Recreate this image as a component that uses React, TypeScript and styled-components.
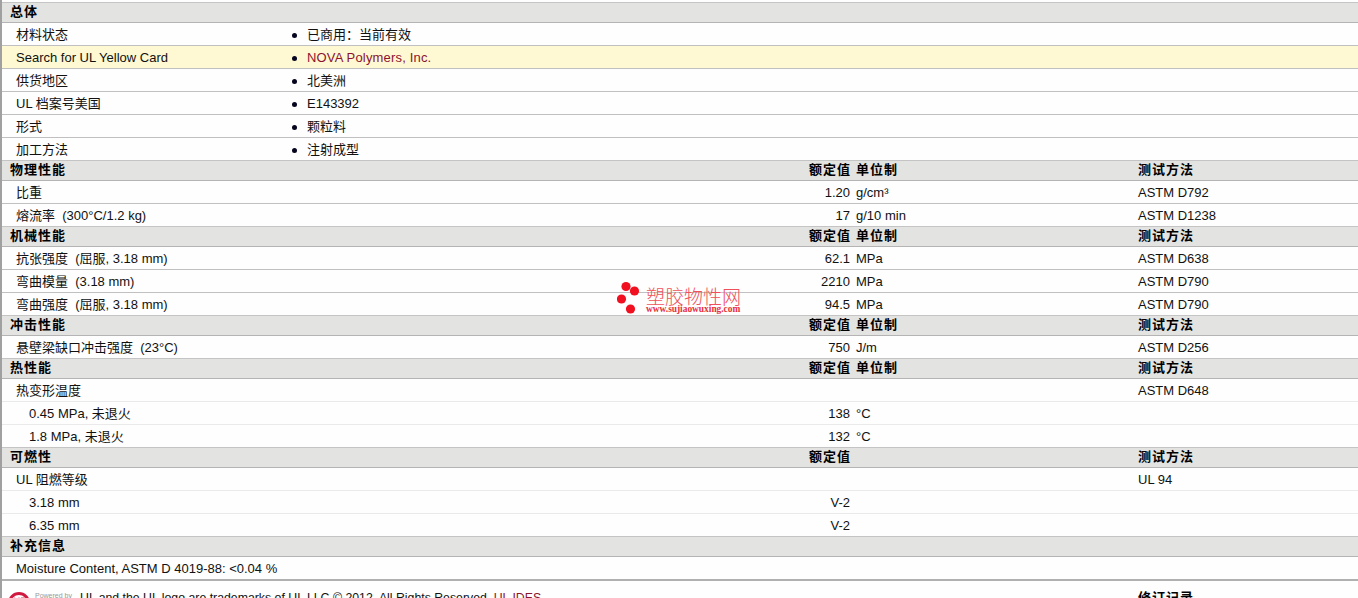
import { createGlobalStyle, styled } from "styled-components";

const GlobalStyle = createGlobalStyle`
  html, body {
    margin: 0;
    height: 598px;
    overflow: hidden;
    background: #fdfefd;
  }
  body {
    font-family: "Liberation Sans", "Noto Sans CJK SC", sans-serif;
    font-size: 13px;
    line-height: 16px;
    color: #111;
  }
`;

type Spec = {
  label: string;
  value?: string;
  unit?: string;
  method?: string;
  sub?: boolean;
  soft?: boolean;
};

type Section = {
  title: string;
  value?: string;
  unit?: string;
  method?: string;
  rows: Spec[];
};

const overview = [
  { label: "材料状态", value: "已商用：当前有效" },
  { label: "Search for UL Yellow Card", value: "NOVA Polymers, Inc.", highlight: true },
  { label: "供货地区", value: "北美洲" },
  { label: "UL 档案号美国", value: "E143392" },
  { label: "形式", value: "颗粒料" },
  { label: "加工方法", value: "注射成型" },
];

const sections: Section[] = [
  {
    title: "物理性能",
    value: "额定值",
    unit: "单位制",
    method: "测试方法",
    rows: [
      { label: "比重", value: "1.20", unit: "g/cm³", method: "ASTM D792" },
      { label: "熔流率\u00a0 (300°C/1.2 kg)", value: "17", unit: "g/10 min", method: "ASTM D1238" },
    ],
  },
  {
    title: "机械性能",
    value: "额定值",
    unit: "单位制",
    method: "测试方法",
    rows: [
      { label: "抗张强度\u00a0 (屈服, 3.18 mm)", value: "62.1", unit: "MPa", method: "ASTM D638" },
      { label: "弯曲模量\u00a0 (3.18 mm)", value: "2210", unit: "MPa", method: "ASTM D790" },
      { label: "弯曲强度\u00a0 (屈服, 3.18 mm)", value: "94.5", unit: "MPa", method: "ASTM D790" },
    ],
  },
  {
    title: "冲击性能",
    value: "额定值",
    unit: "单位制",
    method: "测试方法",
    rows: [{ label: "悬壁梁缺口冲击强度\u00a0 (23°C)", value: "750", unit: "J/m", method: "ASTM D256" }],
  },
  {
    title: "热性能",
    value: "额定值",
    unit: "单位制",
    method: "测试方法",
    rows: [
      { label: "热变形温度", method: "ASTM D648", soft: true },
      { label: "0.45 MPa, 未退火", value: "138", unit: "°C", sub: true, soft: true },
      { label: "1.8 MPa, 未退火", value: "132", unit: "°C", sub: true },
    ],
  },
  {
    title: "可燃性",
    value: "额定值",
    method: "测试方法",
    rows: [
      { label: "UL 阻燃等级", method: "UL 94", soft: true },
      { label: "3.18 mm", value: "V-2", sub: true, soft: true },
      { label: "6.35 mm", value: "V-2", sub: true },
    ],
  },
];

function Watermark() {
  return (
    <WatermarkBox>
      <svg width="26" height="36" viewBox="0 0 26 36">
        <circle cx="9" cy="5.5" r="4.6" fill="#f01020" />
        <circle cx="17.5" cy="10" r="4.6" fill="#f01020" />
        <circle cx="4.5" cy="18" r="4.6" fill="#f01020" />
        <circle cx="13.5" cy="28" r="4.6" fill="#f01020" />
      </svg>
      <WatermarkText>
        <WatermarkName>塑胶物性网</WatermarkName>
        <WatermarkUrl>www.sujiaowuxing.com</WatermarkUrl>
      </WatermarkText>
    </WatermarkBox>
  );
}

export default function App() {
  return (
    <Page>
      <GlobalStyle />
      <Watermark />
      <div>
        <SectionHeader>
          <b>总体</b>
        </SectionHeader>
        {overview.map((row) => (
          <OverviewRow key={row.label} $highlight={row.highlight}>
            <span>{row.label}</span>
            <Bullet />
            <OverviewValue $highlight={row.highlight}>{row.value}</OverviewValue>
          </OverviewRow>
        ))}
      </div>
      {sections.map((section) => (
        <div key={section.title}>
          <SectionHeader>
            <b>{section.title}</b>
            <ValueCell as="b">{section.value}</ValueCell>
            <UnitCell as="b">{section.unit}</UnitCell>
            <b>{section.method}</b>
          </SectionHeader>
          {section.rows.map((row) => (
            <SpecRow key={row.label} $sub={row.sub} $soft={row.soft}>
              <span>{row.label}</span>
              <ValueCell>{row.value}</ValueCell>
              <UnitCell>{row.unit}</UnitCell>
              <span>{row.method}</span>
            </SpecRow>
          ))}
        </div>
      ))}
      <SectionHeader>
        <b>补充信息</b>
      </SectionHeader>
      <NoteRow>Moisture Content, ASTM D 4019-88: &lt;0.04 %</NoteRow>
      <Footer>
        <UlLogo>
          <svg width="24" height="24" viewBox="0 0 24 24">
            <circle cx="12" cy="12" r="9.5" fill="none" stroke="#d01840" strokeWidth="3" />
            <path d="M7.5 6.5v3M12 6.5v3M14 7h4" fill="none" stroke="#e87890" strokeWidth="1.5" />
          </svg>
        </UlLogo>
        <PoweredBy>Powered by</PoweredBy>
        <FooterText>
          UL and the UL logo are trademarks of UL LLC © 2012. All Rights Reserved. <FooterLink>UL IDES</FooterLink>
        </FooterText>
        <RevisionTitle>修订记录</RevisionTitle>
      </Footer>
    </Page>
  );
}

const Page = styled.div`
  position: relative;
  box-sizing: border-box;
  height: 598px;
  overflow: hidden;
  padding-top: 2px;
  border-left: 2px solid #a0a0a0;
`;

const SectionHeader = styled.div`
  box-sizing: border-box;
  display: grid;
  grid-template-columns: 796px 44px 288px 1fr;
  align-items: center;
  height: 21px;
  padding: 0 0 2px 8px;
  background: #e3e3e1;
  border-top: 1px solid #c4c4c4;
  border-bottom: 1px solid #b4b4b4;
  color: #000;
  letter-spacing: 1px;
  white-space: nowrap;

  b:nth-child(2) {
    margin-right: -1px;
  }
`;

const OverviewRow = styled.div<{ $highlight?: boolean }>`
  box-sizing: border-box;
  display: grid;
  grid-template-columns: 276px 15px 1fr;
  align-items: center;
  height: 23px;
  padding: 2px 0 0 14px;
  background: ${(props) => (props.$highlight ? "#fef9d2" : "transparent")};
  border-bottom: 1px solid #c0c0c0;

  &:last-child {
    height: 22px;
    border-bottom: none;
  }
`;

const Bullet = styled.i`
  justify-self: start;
  width: 5px;
  height: 5px;
  border-radius: 50%;
  background: #050520;
`;

const OverviewValue = styled.span<{ $highlight?: boolean }>`
  color: ${(props) => (props.$highlight ? "#8c1230" : "inherit")};
  letter-spacing: ${(props) => (props.$highlight ? "0.17px" : "0")};
`;

const SpecRow = styled.div<{ $sub?: boolean; $soft?: boolean }>`
  box-sizing: border-box;
  display: grid;
  grid-template-columns: ${(props) => (props.$sub ? "769px" : "782px")} 52px 288px 1fr;
  align-items: center;
  height: 23px;
  padding: 2px 0 0 ${(props) => (props.$sub ? "27px" : "14px")};
  border-bottom: 1px solid ${(props) => (props.$soft ? "#eaeaea" : "#c0c0c0")};

  &:last-child {
    height: 22px;
    border-bottom: none;
  }
`;

const ValueCell = styled.span`
  text-align: right;
`;

const UnitCell = styled.span`
  padding-left: 6px;
`;

const NoteRow = styled.div`
  box-sizing: border-box;
  height: 24px;
  padding-left: 14px;
  line-height: 23px;
  border-bottom: 2px solid #b0b0b0;
`;

const Footer = styled.div`
  display: flex;
  padding: 10px 0 0 5px;
`;

const UlLogo = styled.div`
  width: 28px;
  flex: none;
`;

const PoweredBy = styled.span`
  width: 45px;
  flex: none;
  font-size: 7px;
  line-height: 9px;
  color: #999;
`;

const FooterText = styled.span`
  width: 1058px;
  flex: none;
  font-size: 12.3px;
  line-height: 14px;
`;

const FooterLink = styled.span`
  color: #8c1230;
`;

const RevisionTitle = styled.b`
  line-height: 14px;
  letter-spacing: 1px;
  color: #000;
`;

const WatermarkBox = styled.div`
  position: absolute;
  left: 615px;
  top: 281px;
  display: flex;
  gap: 3px;
`;

const WatermarkText = styled.div`
  display: flex;
  flex-direction: column;
  margin-top: 5px;
`;

const WatermarkName = styled.span`
  font-size: 19px;
  line-height: 19px;
  color: #f0505c;
  font-family: "Noto Sans CJK SC", sans-serif;
  font-weight: 300;
`;

const WatermarkUrl = styled.span`
  font-family: "Liberation Serif", serif;
  font-size: 9.4px;
  line-height: 9px;
  font-weight: bold;
  color: #e83040;
  white-space: nowrap;
`;
